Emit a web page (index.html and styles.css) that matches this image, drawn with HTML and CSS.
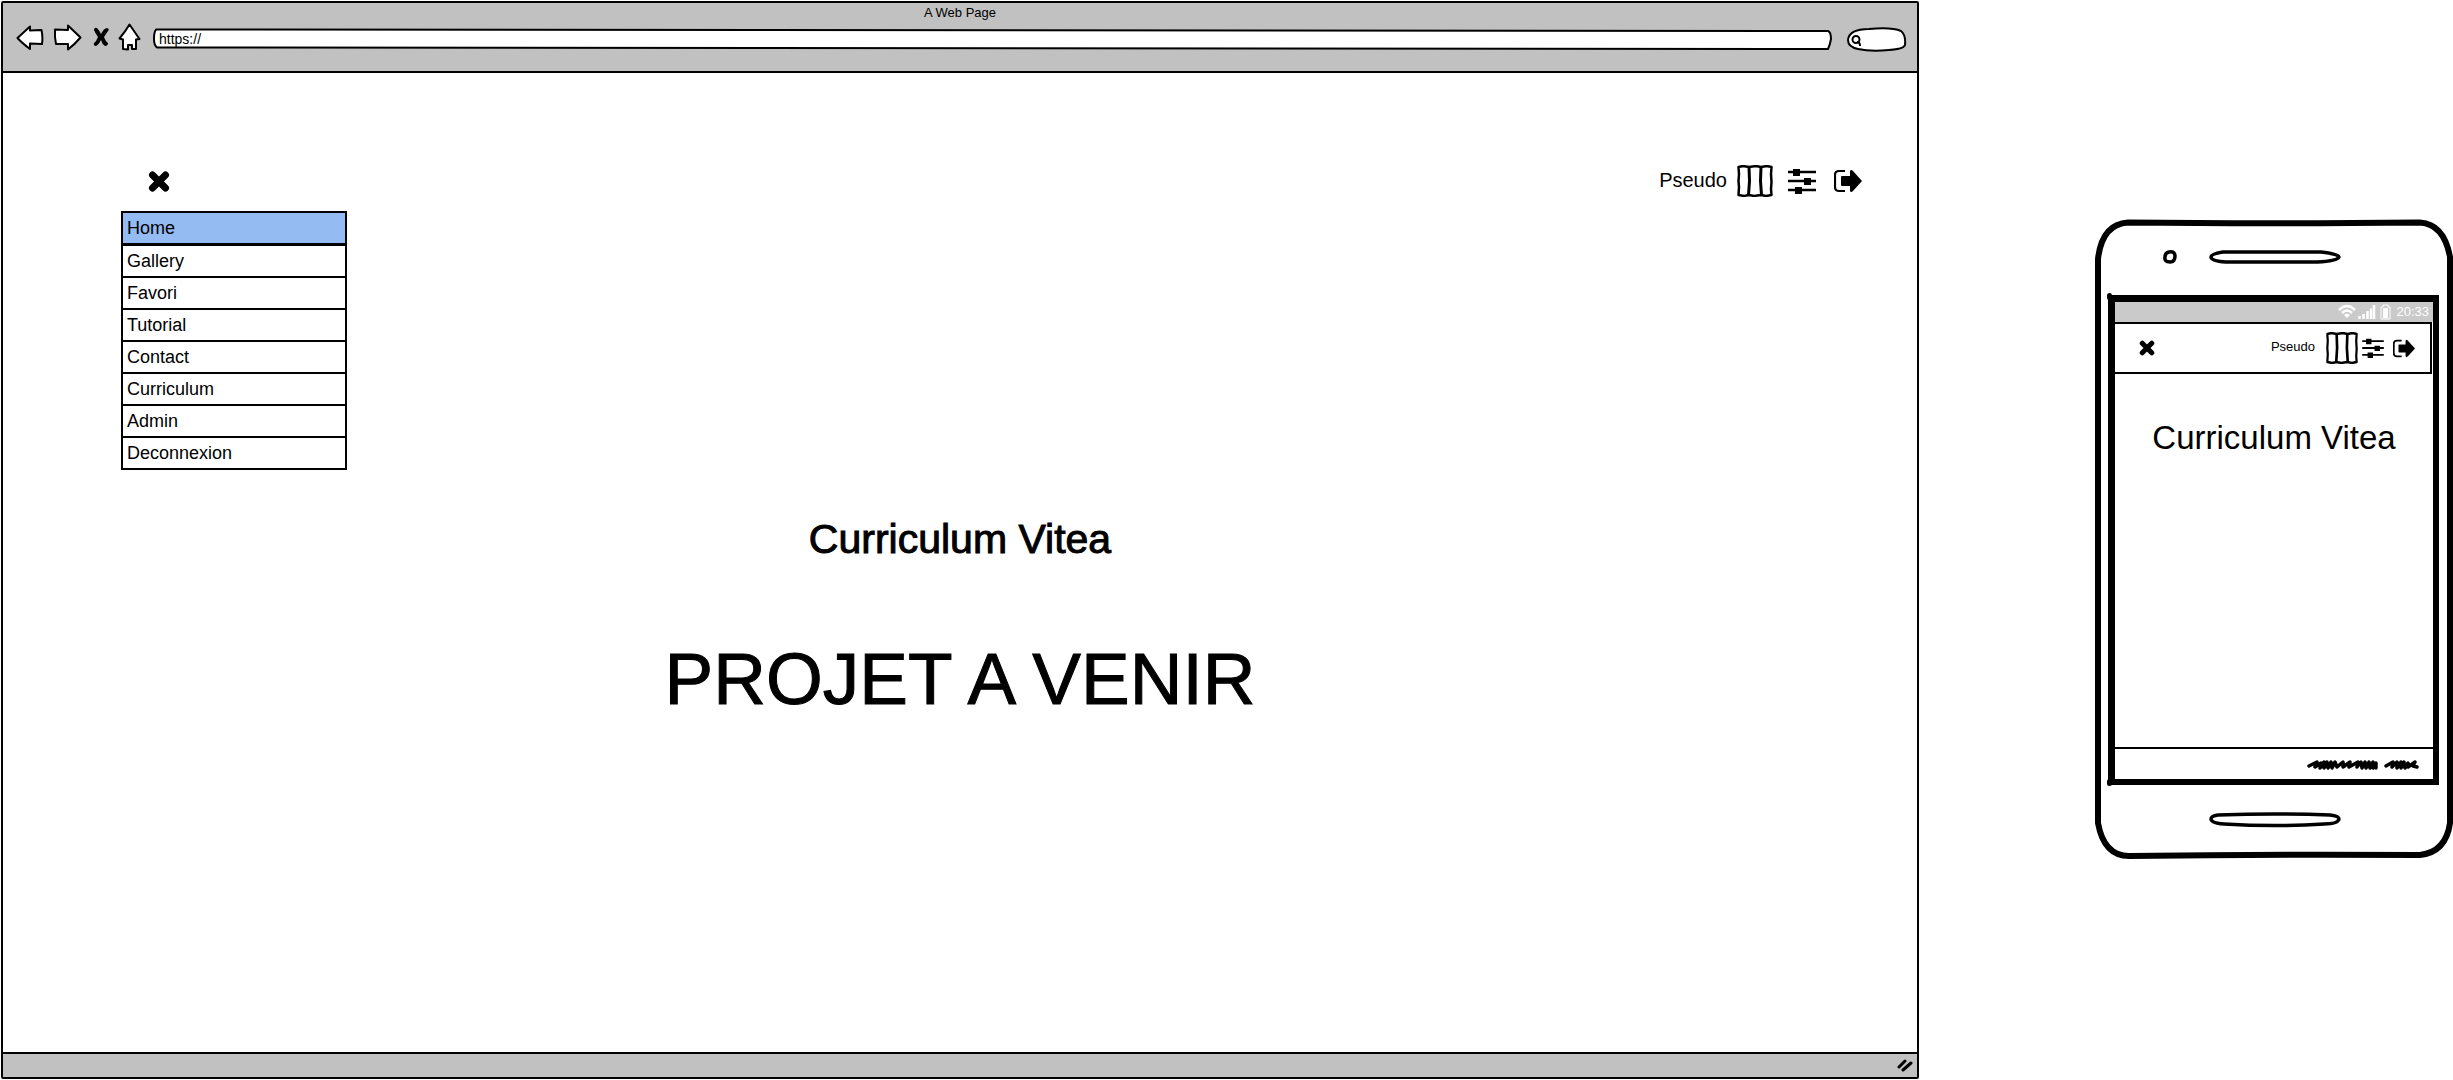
FILE: index.html
```html
<!DOCTYPE html>
<html lang="fr">
<head>
<meta charset="utf-8">
<title>Curriculum Vitea</title>
<link rel="stylesheet" href="styles.css">
</head>
<body>
<svg class="defs" aria-hidden="true">
  <symbol id="cross" viewBox="0 0 22 22"><path d="M4.500 4.500L17.500 17.500M17.500 4.500L4.500 17.500" fill="none" stroke="#000" stroke-width="7" stroke-linecap="round" /></symbol>
  <symbol id="columns" viewBox="0 0 36 32"><path d="M1.500 2L6 1L12 2L19 1L24 2L30 1L34.500 2L34 9L34.500 17L34 24L34.500 30L29 31L24 30L17 31L12 30L7 31L1.500 30L2 22L1.500 16L2 9Z" fill="#fff" stroke="#000" stroke-width="2.500" stroke-linejoin="round"/><path d="M12 2L12.500 16L11.500 30M24 2L23.500 16L24.500 30" fill="none" stroke="#000" stroke-width="3"/></symbol>
  <symbol id="sliders" viewBox="0 0 28 26"><path d="M0 4H28M0 13H28M0 22H28" stroke="#000" stroke-width="2.400"/><path d="M5 1h7v7h-7zM16 10h7v7h-7zM7 19h7v7h-7z"/></symbol>
  <symbol id="logout" viewBox="0 0 28 24"><path d="M11 2H5Q1 2 1 6V18Q1 22 5 22H11" fill="none" stroke="#000" stroke-width="2.200"/><path d="M7 8Q7 7 8 7H16V2Q17 0 19 2L28 12L19 22Q17 24 16 22V17H8Q7 17 7 16Z"/></symbol>
</svg>

<section class="window" aria-label="A Web Page">
  <header class="chrome">
    <p class="chrome-title">A Web Page</p>
    <div class="chrome-row">
      <div class="chrome-buttons">
        <button aria-label="Back"><svg width="28" height="27" viewBox="0 0 28 27"><path d="M1.500 14L14 2.500V6.500L25.500 6Q27 13 26 20L14 19.500V25Q6 19 1.500 14Z" class="outline"/></svg></button>
        <button aria-label="Forward"><svg width="29" height="27" viewBox="0 0 29 27"><path d="M27.500 13.500L15 1.500V6L2 5.500Q1.500 13 3 20H15V25.500Q22 20 27.500 13.500Z" class="outline"/></svg></button>
        <button class="stop" aria-label="Stop"><svg width="16" height="20" viewBox="0 0 16 20"><path d="M1 3Q1 0 4 1Q6 3 8 7Q11 1 14 1Q17 2 15 4L11 10Q13 15 15 16Q15 19 12 19Q9 17 8 13Q5 19 2 19Q-1 17 3 14L5 10Q2 6 1 3Z"/></svg></button>
        <button aria-label="Home"><svg width="23" height="28" viewBox="0 0 23 28"><path d="M11.500 1.500L21.500 16L18 16.500V26H14V22H10V26.500L5 26V16.500L1.500 15.500Q7 9 11.500 1.500Z" class="outline"/></svg></button>
      </div>
      <div class="address">
        <svg viewBox="0 0 1679 22" preserveAspectRatio="none" aria-hidden="true"><path d="M3 1.500L1675 3Q1678 4 1678 11Q1677 17 1675 21L4 19.500Q1 17 1 11Q1 4 3 1.500Z" class="outline"/></svg>
        <input type="text" value="https://" aria-label="Address">
      </div>
      <div class="search">
        <svg viewBox="0 0 60 25" preserveAspectRatio="none" aria-hidden="true"><path d="M1 13Q2 2 22 2Q45 0 54 4Q59 8 58 18Q57 22 42 23Q24 25 11 22Q1 20 1 13Z" class="outline"/><circle cx="9" cy="12.500" r="3.500" class="outline"/><path d="M10 15Q13 15 13 19" class="outline"/></svg>
        <input type="search" aria-label="Search">
      </div>
    </div>
  </header>

  <main class="page">
    <div class="toolbar">
      <button class="close" aria-label="Close menu"><svg width="22" height="23"><use href="#cross"/></svg></button>
      <span class="user">Pseudo</span>
      <div class="tools">
        <button aria-label="Columns"><svg width="36" height="32"><use href="#columns"/></svg></button>
        <button class="settings" aria-label="Settings"><svg width="28" height="26"><use href="#sliders"/></svg></button>
        <button aria-label="Log out"><svg width="28" height="24"><use href="#logout"/></svg></button>
      </div>
    </div>
    <nav class="menu">
      <a class="current" href="#home">Home</a>
      <a href="#gallery">Gallery</a>
      <a href="#favori">Favori</a>
      <a href="#tutorial">Tutorial</a>
      <a href="#contact">Contact</a>
      <a href="#curriculum">Curriculum</a>
      <a href="#admin">Admin</a>
      <a href="#deconnexion">Deconnexion</a>
    </nav>
    <h1 class="title">Curriculum Vitea</h1>
    <p class="notice">PROJET A VENIR</p>
  </main>

  <footer class="statusbar"><svg width="16" height="13" viewBox="0 0 16 13"><path d="M2 8L8 2M6 11L14 4" fill="none" stroke="#000" stroke-width="3" stroke-linecap="round"/></svg></footer>
</section>

<section class="phone" aria-label="Mobile">
  <svg class="phone-frame" viewBox="0 0 359 640" preserveAspectRatio="none" aria-hidden="true"><path d="M34 3.500Q170 5 326 3.500Q350 5 356 38V604Q352 633 326 636Q180 635 35 637Q10 637 4 604Q5 320 4 40Q8 5 34 3.500Z" fill="#fff" stroke="#000" stroke-width="6" stroke-linejoin="round"/></svg>
  <div class="phone-top">
    <svg width="14" height="14" viewBox="0 0 14 14" aria-hidden="true"><path d="M6 2Q12 1 12 6Q12 12 7 12Q1 12 2 7Q2 3 6 2Z" fill="none" stroke="#000" stroke-width="3.500"/></svg>
    <svg width="132" height="14" viewBox="0 0 132 14" aria-hidden="true"><path d="M14 2H112Q130 4 130 7Q128 11 108 12H17Q2 11 2 7Q2 4 14 2Z" fill="none" stroke="#000" stroke-width="3.500"/></svg>
  </div>
  <div class="screen">
    <div class="status">
      <svg width="54" height="16" viewBox="0 0 54 16" fill="none" stroke="#fff" aria-hidden="true"><path d="M1 6Q9 -2 17 6M4 9Q9 4 14 9" stroke-width="2.500"/><path d="M6 11Q9 8 12 11L9 14Z" fill="#fff" stroke="none"/><path d="M21.500 15V12M25.500 15V10M29.500 15V7M33 15V4.500M36 15V1" stroke-width="2.500"/><path d="M43 3H45V1H50V3H52V15H43Z" stroke-width="1"/><path d="M45 4H50V14H45Z" fill="#fff" stroke="none"/></svg>
      <time>20:33</time>
    </div>
    <div class="phone-bar">
      <button class="phone-close" aria-label="Close menu"><svg width="16" height="16"><use href="#cross"/></svg></button>
      <span class="phone-user">Pseudo</span>
      <div class="phone-tools">
        <button aria-label="Columns"><svg width="32" height="32" viewBox="0 0 36 32" preserveAspectRatio="none"><use href="#columns" width="36" height="32"/></svg></button>
        <button class="phone-settings" aria-label="Settings"><svg width="22" height="20"><use href="#sliders"/></svg></button>
        <button aria-label="Log out"><svg width="22" height="19"><use href="#logout"/></svg></button>
      </div>
    </div>
    <h2 class="phone-title">Curriculum Vitea</h2>
    <div class="phone-footer">
      <svg width="112" height="12" viewBox="0 0 112 12" aria-hidden="true"><path d="M2 7L10 3L8 8L14 4L13 9L17 3L17 9L20 3L21 9L24 3L25 9L28 3L30 8L36 3L36 8L43 3L42 8L51 3L50 8L54 3L55 9L58 3L59 9L62 3L63 9L66 3L66 9L69 4L69 9M79 7L86 3L85 8L90 3L90 9L94 3L94 9L97 3L98 9L101 4L101 8L108 3L106 7L110 8" fill="none" stroke="#000" stroke-width="3.500" stroke-linecap="round" stroke-linejoin="round"/></svg>
    </div>
  </div>
  <svg class="home-button" width="132" height="16" viewBox="0 0 132 16" aria-hidden="true"><path d="M9 3Q66 1 121 3Q130 4 130 7Q129 12 115 12Q66 15 15 12Q2 11 2 7Q2 4 9 3Z" fill="none" stroke="#000" stroke-width="3.500"/></svg>
</section>
</body>
</html>
```
FILE: styles.css
```css
* {
  box-sizing: border-box;
}

body {
  margin: 0;
  min-height: 100vh;
  display: flex;
  align-items: center;
  gap: 175px;
  background: #fff;
  color: #000;
  font-family: "Liberation Sans", Arial, sans-serif;
}

p, h1, h2 {
  margin: 0;
  font-weight: normal;
}

button {
  display: flex;
  padding: 0;
  border: 0;
  background: none;
}

svg {
  display: block;
  flex: none;
}

.defs {
  position: absolute;
  width: 0;
  height: 0;
}

.outline {
  fill: #fff;
  stroke: #000;
  stroke-width: 2;
  stroke-linejoin: round;
}

/* Browser window */
.window {
  flex: 1;
  align-self: stretch;
  display: flex;
  flex-direction: column;
  margin: 1px 0 1px 1px;
  border: 2px solid #000;
  border-radius: 2px;
}

.chrome {
  padding-bottom: 16px;
  background: #c1c1c1;
  border-bottom: 2px solid #000;
}

.chrome-title {
  font-size: 13px;
  line-height: 20px;
  text-align: center;
}

.chrome-row {
  display: flex;
  align-items: center;
  height: 32px;
  padding: 0 10px 0 13px;
}

.chrome-buttons {
  display: flex;
  align-items: center;
  gap: 9px;
  margin-right: 12px;
  padding-bottom: 4px;
}

.stop {
  margin: 0 0 0 2px;
}

.address,
.search {
  position: relative;
}

.address {
  flex: 1;
  height: 22px;
  margin-right: 15px;
}

.search {
  width: 60px;
  height: 25px;
}

.address svg,
.search svg {
  position: absolute;
  inset: 0;
  width: 100%;
  height: 100%;
}

.address input,
.search input {
  position: relative;
  display: block;
  width: 100%;
  height: 100%;
  border: 0;
  background: none;
  outline: none;
  font: 14px "Liberation Sans", Arial, sans-serif;
}

.address input {
  padding: 0 6px;
}

.search input {
  padding: 0 6px 0 16px;
}

.page {
  flex: 1;
  padding-top: 92px;
}

.toolbar {
  display: flex;
  align-items: center;
  padding: 0 55px 0 145px;
}

.user {
  margin: 0 10px 0 auto;
  padding-bottom: 3px;
  font-size: 20px;
  line-height: 24px;
}

.tools {
  display: flex;
  align-items: center;
}

.settings {
  margin: 0 18px 0 15px;
}

.menu {
  width: 226px;
  margin: 14px 0 0 118px;
  border: 2px solid #000;
}

.menu a {
  display: block;
  padding-left: 4px;
  border-bottom: 2px solid #000;
  color: #000;
  font-size: 18px;
  line-height: 30px;
  text-decoration: none;
}

.menu a:last-child {
  border-bottom: 0;
}

.menu .current {
  background: #94bbf2;
  border-bottom-width: 3px;
}

.title {
  margin-top: 45px;
  font-size: 41px;
  line-height: 48px;
  text-align: center;
  -webkit-text-stroke: 1px #000;
}

.notice {
  margin-top: 76px;
  font-size: 73px;
  line-height: 80px;
  text-align: center;
  -webkit-text-stroke: 1px #000;
}

.statusbar {
  display: flex;
  justify-content: flex-end;
  padding: 5px 4px;
  background: #c1c1c1;
  border-top: 2px solid #000;
}

/* Phone */
.phone {
  position: relative;
  flex: none;
  width: 359px;
  margin-bottom: 2px;
  padding: 31px 14px;
}

.phone-frame {
  position: absolute;
  inset: 0;
  z-index: -1;
  width: 100%;
  height: 100%;
}

.phone-top {
  display: flex;
  align-items: center;
  gap: 32px;
  padding: 0 0 31px 55px;
}

.screen {
  position: relative;
  display: flex;
  flex-direction: column;
  width: 331px;
  height: 490px;
  border: 7px solid #000;
  border-right-width: 6px;
  border-bottom-width: 6px;
}

/* Overshooting pen strokes at the left corners */
.screen::before,
.screen::after {
  content: "";
  position: absolute;
  left: -8px;
  width: 5px;
  height: 7px;
  border-radius: 3px;
  background: #000;
}

.screen::before {
  top: -9px;
}

.screen::after {
  bottom: -7px;
}

.status {
  display: flex;
  align-items: center;
  justify-content: flex-end;
  gap: 4px;
  padding-right: 4px;
  background: #cacaca;
  color: #fff;
  font-size: 13px;
  line-height: 20px;
}

.phone-bar {
  display: flex;
  align-items: center;
  height: 52px;
  margin-right: 1px;
  padding: 0 15px 0 24px;
  border: solid #000;
  border-width: 2px 2px 2px 0;
}

.phone-user {
  margin: 0 11px 0 auto;
  padding-bottom: 3px;
  font-size: 13px;
  line-height: 16px;
}

.phone-tools {
  display: flex;
  align-items: center;
}

.phone-settings {
  margin: 0 9px 0 4px;
}

.phone-title {
  margin-top: 44px;
  font-size: 33px;
  line-height: 40px;
  text-align: center;
}

.phone-footer {
  display: flex;
  justify-content: flex-end;
  margin-top: auto;
  padding: 10px 14px 8px;
  border-top: 2px solid #000;
}

.home-button {
  margin: 27px 0 0 101px;
}
```
